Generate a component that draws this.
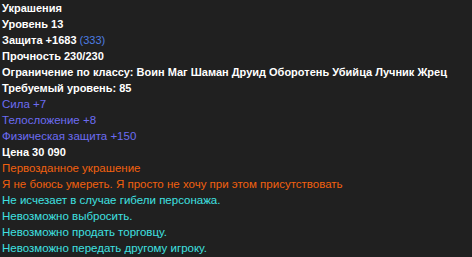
export default function App() {
    const lines = [
        { text: "Украшения", cls: "font-bold text-white text-[11px]" },
        { text: "Уровень 13", cls: "font-bold text-white text-[11px]" },
        { text: null, cls: "font-bold text-white text-[11px]" },
        { text: "Прочность 230/230", cls: "font-bold text-white text-[11px]" },
        { text: "Ограничение по классу: Воин Маг Шаман Друид Оборотень Убийца Лучник Жрец", cls: "font-bold text-white text-[11px]" },
        { text: "Требуемый уровень: 85", cls: "font-bold text-white text-[11px]" },
        { text: "Сила +7", cls: "text-[#6c6cf2]" },
        { text: "Телосложение +8", cls: "text-[#6c6cf2]" },
        { text: "Физическая защита +150", cls: "text-[#6c6cf2]" },
        { text: "Цена 30 090", cls: "font-bold text-white text-[11px]" },
        { text: "Первозданное украшение", cls: "text-[#f2600f]" },
        { text: "Я не боюсь умереть. Я просто не хочу при этом присутствовать", cls: "text-[#f2600f]" },
        { text: "Не исчезает в случае гибели персонажа.", cls: "text-[#3fe0e0]" },
        { text: "Невозможно выбросить.", cls: "text-[#3fe0e0]" },
        { text: "Невозможно продать торговцу.", cls: "text-[#3fe0e0]" },
        { text: "Невозможно передать другому игроку.", cls: "text-[#3fe0e0]" },
    ];

    return (
        <div className="w-[472px] h-[257px] overflow-hidden bg-[#202020] pl-[2px] font-['Liberation_Sans',sans-serif] text-[11.5px] leading-[16px]">
            {lines.map((l, i) => (
                <div key={i} className={"whitespace-nowrap " + l.cls}>
                    {l.text === null ? (
                        <>Защита +1683 <span className="font-normal text-[#4d7ee0]">(333)</span></>
                    ) : l.text}
                </div>
            ))}
        </div>
    );
}
